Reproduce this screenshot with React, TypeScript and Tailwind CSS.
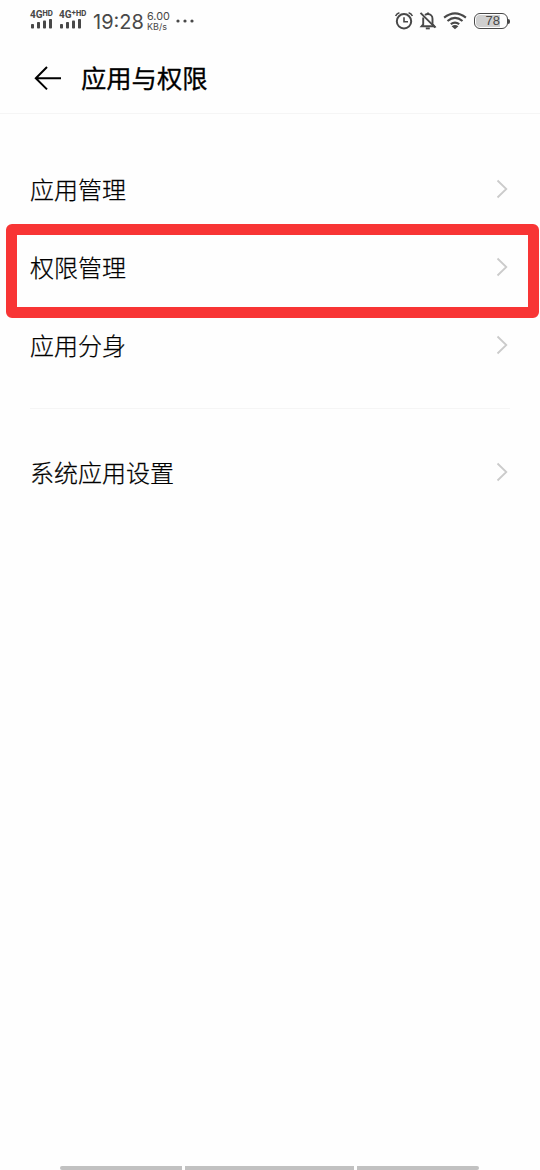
import clsx from 'clsx';

const apps = [
  { id: 1, title: '应用管理', marked: false },
  { id: 2, title: '权限管理', marked: true },
  { id: 3, title: '应用分身', marked: false },
];

// 信号格
function Signal({ label }: { label: any }) {
  return (
    <div className="flex flex-col w-[29px] h-[20px]">
      <div className="h-[9px] text-[10px] leading-[10px] font-bold flex whitespace-nowrap font-['Roboto',sans-serif]">
        {label}
      </div>
      <svg
        width="23"
        height="10"
        viewBox="0 0 23 10"
        fill="#484848"
      >
        <rect x="1" y="5" width="3" height="4.5" rx="0.8" />
        <rect x="7" y="3" width="3" height="6.5" rx="0.8" />
        <rect x="13" y="1.5" width="3" height="8" rx="0.8" />
        <rect x="19" y="0" width="3" height="9.5" rx="0.8" />
      </svg>
    </div>
  );
}

function StatusBar() {
  return (
    <div className="h-[42px] pl-[30px] pr-[30px] flex items-start text-[#484848] font-['Inter','Noto_Sans_CJK_SC',sans-serif]">
      <div className="flex pt-[10px]">
        <Signal
          label={
            <>
              <span>4G</span>
              <span className="text-[7px] leading-[7px] font-extrabold font-['Inter']">HD</span>
            </>
          }
        />
        <Signal
          label={
            <>
              <span>4G</span>
              <span className="text-[8px] leading-[6px]">+</span>
              <span className="text-[7px] leading-[7px] font-extrabold font-['Inter']">HD</span>
            </>
          }
        />
      </div>
      <div className="ml-[5px] mt-[10px] w-[54px] text-[20px] leading-6 whitespace-nowrap">
        19:28
      </div>
      <div className="mt-[11px] w-[29px] whitespace-nowrap">
        <div className="text-[10.8px] leading-[11px]">6.00</div>
        <div className="text-[9px] leading-[10px]">KB/s</div>
      </div>
      <svg width="19" height="4" viewBox="0 0 19 4" className="mt-[19px]" fill="#484848">
        <circle cx="2" cy="2" r="1.6" />
        <circle cx="9" cy="2" r="1.6" />
        <circle cx="16" cy="2" r="1.6" />
      </svg>

      <div className="ml-auto flex mt-[10px]">
        <svg width="20" height="22" viewBox="0 0 20 22" fill="none" stroke="#484848">
          <circle cx="9" cy="11.3" r="7.2" strokeWidth="2" />
          <path d="M9 7.3v4.4h4" strokeWidth="1.6" />
          <path d="M0.6 6Q1.8 3.4 4.4 2.8M17.4 6Q16.2 3.4 13.6 2.8" strokeWidth="1.6" />
        </svg>
        <svg
          width="18"
          height="22"
          viewBox="0 0 18 22"
          className="ml-[4px]"
          fill="none"
          stroke="#484848"
          strokeWidth="1.9"
        >
          <path d="M4.2 7.5v6.8L2.6 16.2h12.8L13.5 14V8.7c0-2.8-2-4.7-4.6-4.7-1.2 0-2.1.4-2.9 1" />
          <path d="M1.5 2.8 16.3 17.6" />
          <path d="M6.8 18.4h4" />
          <path d="M9 2.4v1.8" />
        </svg>
        <svg
          width="24"
          height="22"
          viewBox="0 0 24 22"
          className="ml-[6px]"
          fill="none"
          stroke="#484848"
          strokeWidth="2.1"
        >
          <path d="M1.1 7.6Q12 -1 22.9 7.6" />
          <path d="M4.5 11Q12 4.8 19.5 11" />
          <path d="M7.8 14.2Q12 11 16.2 14.2" />
          <path d="M12 19.2 8.6 16.2Q12 13.6 15.4 16.2Z" fill="#484848" stroke="none" />
        </svg>
        <div className="ml-[7px] mt-[3px] flex items-center h-4">
          <div className="w-[34px] h-4 rounded-[6px] border-[1.5px] border-[#484848] p-px">
            <div className="w-[24px] h-full rounded-l-[4px] bg-[#cfcfcf] flex items-center justify-end text-[13px] leading-3 font-['Liberation_Sans']">
              78
            </div>
          </div>
          <div className="w-[2px] h-[5px] rounded-r-sm bg-[#484848]" />
        </div>
      </div>
    </div>
  );
}

function Row({ title, marked }: { title: string; marked?: boolean }) {
  return (
    <div className="relative h-[78px] px-[30px] flex items-center justify-between">
      <div className="text-[24px] leading-9 font-light pb-px [-webkit-text-stroke:0.25px_black]">
        {title}
      </div>
      <svg
        width="14"
        height="20"
        viewBox="0 0 14 20"
        fill="none"
        stroke="#cbcbcb"
        strokeWidth="1.8"
      >
        <path d="M1.5 1.5 10.3 10 1.5 18.5" />
      </svg>
      <div
        className={clsx(
          'absolute left-[6px] right-[1px] -top-[4px] h-[94.4px] rounded-[6px] border-[11px] border-[#f83535]',
          !marked && 'hidden',
        )}
      />
    </div>
  );
}

export default function App() {
  return (
    <div className="w-full h-[1170px] bg-[#fefefe] text-black flex flex-col overflow-hidden font-['Noto_Sans_CJK_SC',sans-serif]">
      <StatusBar />
      <div className="h-[72px] pl-[34px] flex items-center border-b border-[#f5f5f5]">
        <svg width="28" height="26" viewBox="0 0 28 26" fill="none" stroke="#000" strokeWidth="2">
          <path d="M27 13.2H2M13 2 1.8 13.2 13 24.4" />
        </svg>
        <div className="ml-[19px] pb-[2px] text-[25.3px] leading-9 font-normal [-webkit-text-stroke:0.3px_black]">
          应用与权限
        </div>
      </div>

      <div className="pt-[36px]">
        {apps.map((item) => (
          <Row key={item.id} title={item.title} marked={item.marked} />
        ))}
      </div>
      <div className="mx-[30px] mt-[24px] mb-[24px] border-t border-[#f5f5f5]" />
      <Row title="系统应用设置" />

      {/* 底部导航条 */}
      <div className="mt-auto mx-[60px] flex gap-[3px] h-[4px]">
        <div className="w-[122px] bg-[#c1c1c1] rounded-l-sm" />
        <div className="w-[169px] bg-[#c1c1c1]" />
        <div className="w-[122px] bg-[#c1c1c1] rounded-r-sm" />
      </div>
    </div>
  );
}
